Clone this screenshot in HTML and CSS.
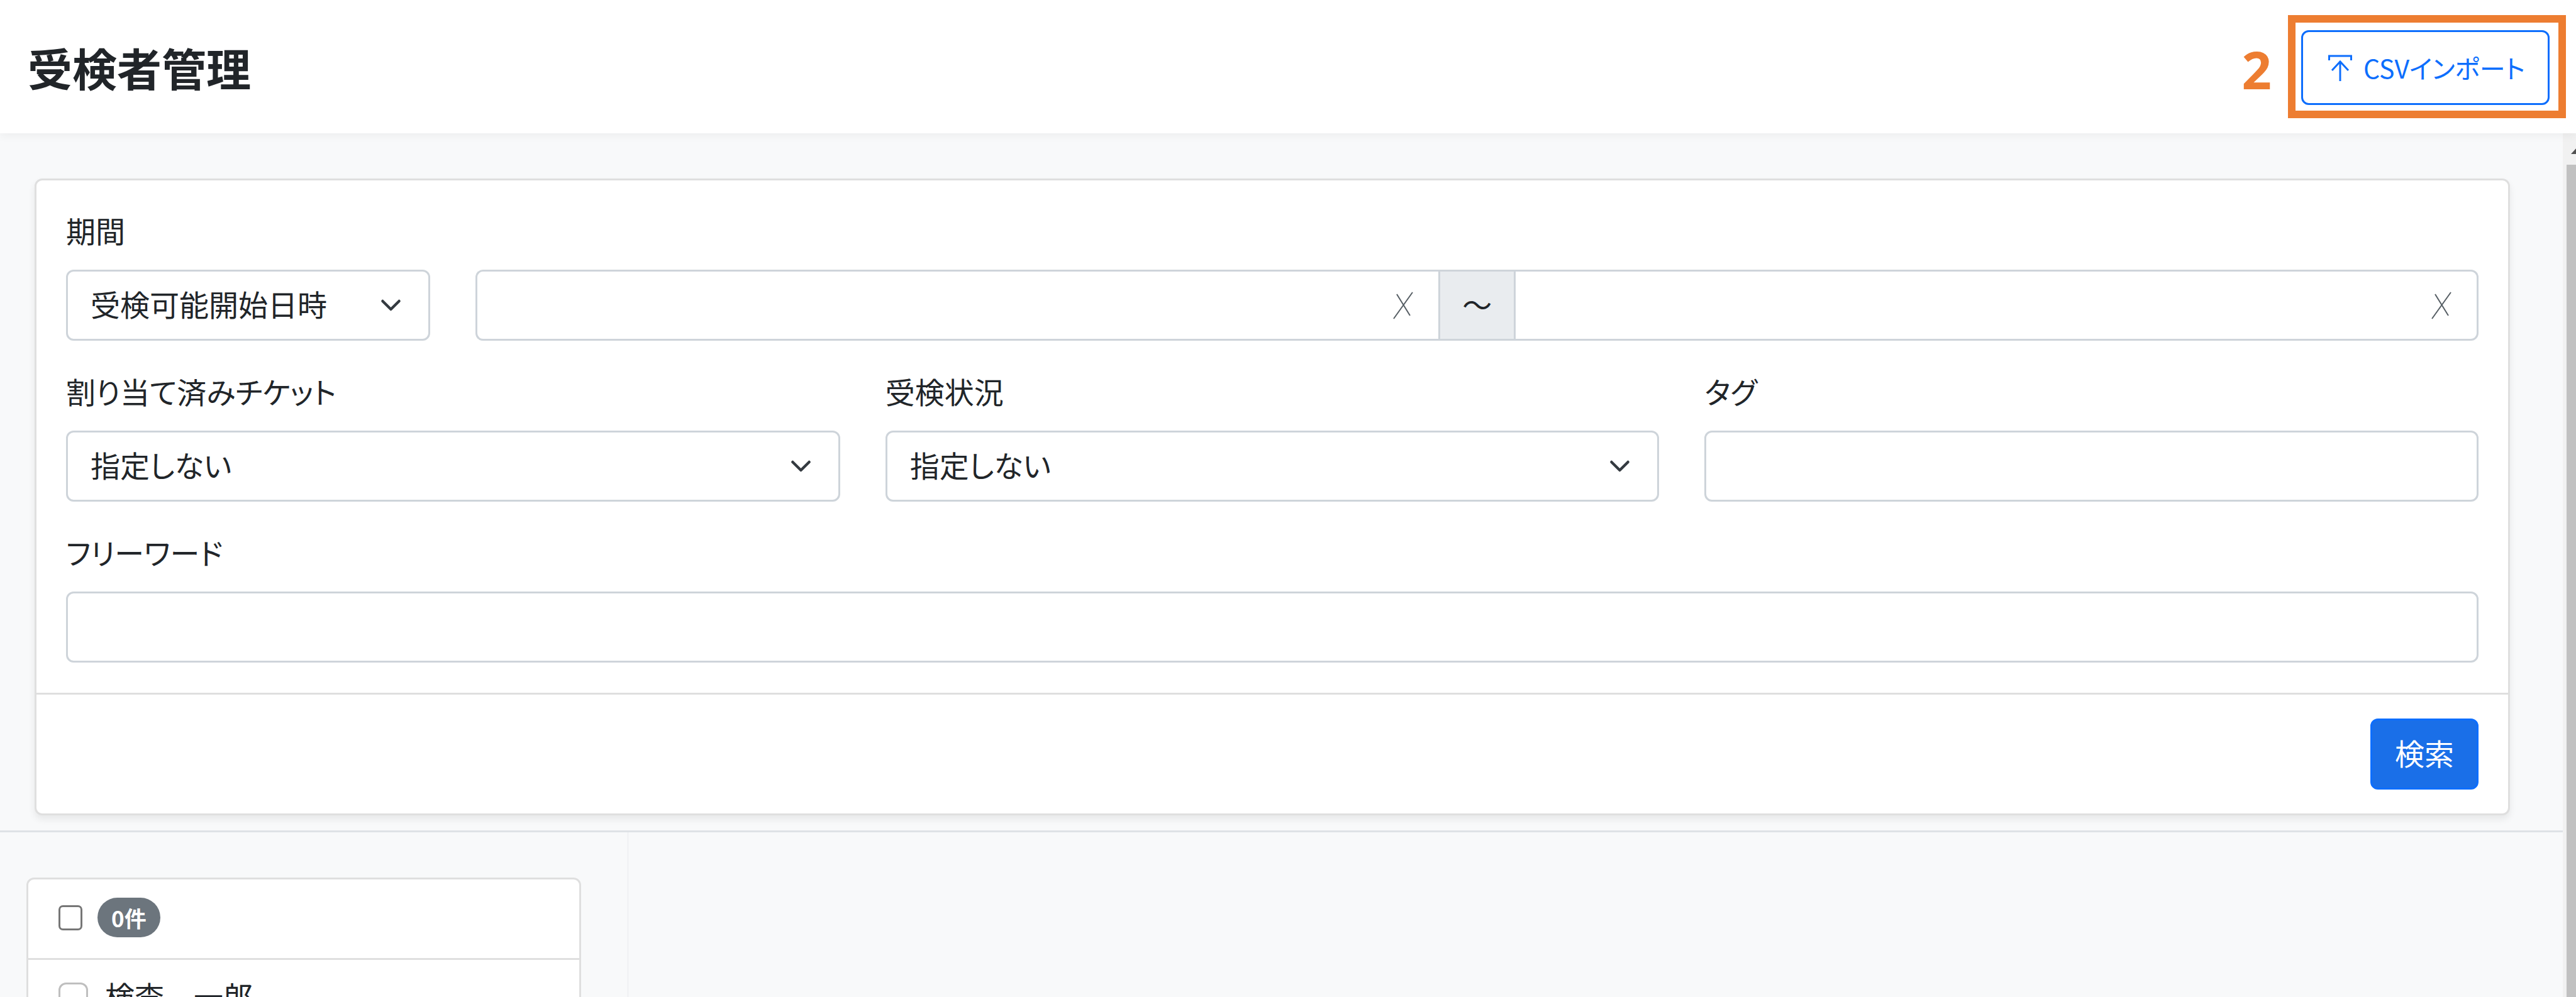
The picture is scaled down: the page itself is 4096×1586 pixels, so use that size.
FILE: index.html
```html
<!DOCTYPE html>
<html lang="ja">
<head>
  <meta charset="UTF-8" />
  <meta name="viewport" content="width=device-width, initial-scale=1.0" />
  <title>受検者管理</title>
  <link rel="stylesheet" href="styles.css">
</head>
<body>
  <header class="page-header">
    <h1>受検者管理</h1>
    <div class="header-actions">
      <span class="step-number">2</span>
      <div class="step-frame">
        <button type="button" class="btn btn-outline">
          <svg class="icon-import" viewBox="0 0 38 42" fill="none" stroke="currentColor" stroke-width="3" aria-hidden="true">
            <path d="M1.500 9V2H36.500V9M19 42V11M6 25L19 11L32 25" />
          </svg>
          CSVインポート
        </button>
      </div>
    </div>
  </header>

  <div class="viewport">
    <main class="content">
      <form class="card search-card">
        <div class="card-body">
          <div class="field col-2">
            <label for="period-type">期間</label>
            <select id="period-type" class="control">
              <option>受検可能開始日時</option>
            </select>
          </div>
          <div class="field col-10 field-bottom">
            <div class="range">
              <div class="control range-start">
                <input type="text" aria-label="開始日時" />
                <button type="button" class="clear" aria-label="開始日時をクリア">
                  <svg viewBox="0 0 32 44" fill="none" stroke="currentColor" stroke-width="2" aria-hidden="true">
                    <path d="M1 43L31 1M6 4L27 38" />
                  </svg>
                </button>
              </div>
              <span class="range-sep">～</span>
              <div class="control range-end">
                <input type="text" aria-label="終了日時" />
                <button type="button" class="clear" aria-label="終了日時をクリア">
                  <svg viewBox="0 0 32 44" fill="none" stroke="currentColor" stroke-width="2" aria-hidden="true">
                    <path d="M1 43L31 1M6 4L27 38" />
                  </svg>
                </button>
              </div>
            </div>
          </div>

          <div class="field col-4">
            <label for="ticket">割り当て済みチケット</label>
            <select id="ticket" class="control">
              <option>指定しない</option>
            </select>
          </div>
          <div class="field col-4">
            <label for="status">受検状況</label>
            <select id="status" class="control">
              <option>指定しない</option>
            </select>
          </div>
          <div class="field col-4">
            <label for="tag">タグ</label>
            <input type="text" id="tag" class="control" />
          </div>

          <div class="field col-12">
            <label for="freeword">フリーワード</label>
            <input type="text" id="freeword" class="control" />
          </div>
        </div>
        <div class="card-footer">
          <button type="submit" class="btn btn-primary">検索</button>
        </div>
      </form>

      <div class="results">
        <section class="list-pane">
          <div class="card">
            <div class="list-header">
              <input type="checkbox" id="check-all" class="check-all" />
              <label for="check-all" class="badge">0件</label>
            </div>
            <div class="list-item">
              <input type="checkbox" id="examinee-1" class="check" />
              <label for="examinee-1">検査　一郎</label>
            </div>
          </div>
        </section>
        <section class="detail-pane"></section>
      </div>
    </main>

    <div class="scrollbar" aria-hidden="true">
      <svg class="scroll-arrow" viewBox="0 0 50 50" fill="#505050">
        <path d="M13 33L25 20L37 33Z" />
      </svg>
      <div class="scroll-thumb"></div>
    </div>
  </div>
</body>
</html>
```
FILE: styles.css
```css
* {
  box-sizing: border-box;
}

body {
  height: 100vh;
  margin: 0;
  display: flex;
  flex-direction: column;
  overflow: hidden;
  font-family: "Noto Sans CJK JP", sans-serif;
  font-size: 47px;
  line-height: 71px;
  font-feature-settings: "palt";
  color: #212529;
  background: #f8f9fa;
}

input,
select,
button {
  font: inherit;
  font-feature-settings: inherit;
  color: inherit;
  margin: 0;
}

/* header */
.page-header {
  display: flex;
  flex: none;
  justify-content: space-between;
  align-items: center;
  height: 212px;
  padding: 0 16px 0 44px;
  background: white;
  box-shadow: 0 6px 12px rgba(0, 0, 0, 0.04);
  position: relative;
}

h1 {
  margin: 0;
  font-size: 71px;
  font-weight: bold;
}

.header-actions {
  display: flex;
  align-items: center;
  gap: 26px;
}

.step-number {
  padding-top: 6px;
  font-family: "Noto Sans", sans-serif;
  font-size: 83px;
  font-weight: bold;
  color: #ed7d31;
}

.step-frame {
  padding: 12px 14px 9px 9px;
  border: 12px solid #ed7d31;
}

/* buttons */
.btn {
  display: flex;
  align-items: center;
  height: 113px;
  padding: 0 36px 6px;
  border: 3px solid #0d6efd;
  border-radius: 12px;
  cursor: pointer;
}

.btn-outline {
  height: 119px;
  gap: 18px;
  padding: 0 36px 0 40px;
  color: #0d6efd;
  background: white;
  font-size: 41px;
}

.btn-primary {
  color: white;
  background: #1a6fe8;
}

.icon-import {
  width: 38px;
  height: 42px;
}

/* scroll area */
.viewport {
  display: flex;
  flex: 1;
  min-height: 0;
}

.content {
  display: flex;
  flex: 1;
  flex-direction: column;
  min-width: 0;
  padding-top: 72px;
  overflow: hidden;
}

.scrollbar {
  display: flex;
  flex-direction: column;
  width: 21px;
  overflow: hidden;
  background: #f1f1f1;
}

.scroll-arrow {
  flex: none;
  width: 50px;
  height: 50px;
}

.scroll-thumb {
  flex: 1;
  margin-left: 6px;
  background: #c1c1c1;
}

/* search form */
.card {
  background: white;
  border: 3px solid #dfdfdf;
  border-radius: 12px;
}

.search-card {
  flex: none;
  margin: 0 84px 24px 55px;
  box-shadow: 0 6px 12px rgba(0, 0, 0, 0.075);
}

.card-body {
  display: grid;
  grid-template-columns: repeat(12, 1fr);
  gap: 44px 72px;
  padding: 43px 47px 48px;
}

.col-2 {
  grid-column: span 2;
}

.col-4 {
  grid-column: span 4;
}

.col-10 {
  grid-column: span 10;
}

.col-12 {
  grid-column: span 12;
}

.field {
  display: flex;
  flex-direction: column;
  gap: 28px;
  min-width: 0;
}

.field-bottom {
  justify-content: flex-end;
}

.control {
  width: 100%;
  height: 113px;
  padding: 0 36px 6px;
  border: 3px solid #ced4da;
  border-radius: 12px;
  background: white;
}

select.control {
  appearance: none;
  background: white url("data:image/svg+xml,%3csvg xmlns='http://www.w3.org/2000/svg' viewBox='0 0 16 16'%3e%3cpath fill='none' stroke='%23343a40' stroke-linecap='round' stroke-linejoin='round' stroke-width='2' d='m2 5 6 6 6-6'/%3e%3c/svg%3e") no-repeat right 36px center / 47px 35px;
}

.range {
  display: flex;
}

.range .control {
  display: flex;
  flex: 1;
  align-items: center;
  min-width: 0;
  padding: 0 40px 0 36px;
}

.range input {
  flex: 1;
  min-width: 0;
  padding: 0;
  border: none;
  background: none;
}

.range .range-start {
  border-right: none;
  border-radius: 12px 0 0 12px;
}

.range .range-end {
  border-left: none;
  border-radius: 0 12px 12px 0;
}

.range-sep {
  display: flex;
  align-items: center;
  justify-content: center;
  width: 123px;
  padding-bottom: 6px;
  border: 3px solid #ced4da;
  background: #e9ecef;
  font-feature-settings: normal;
}

.clear {
  display: flex;
  padding: 0;
  border: none;
  background: none;
  color: #565e64;
  cursor: pointer;
}

.clear svg {
  width: 32px;
  height: 44px;
}

.card-footer {
  display: flex;
  justify-content: flex-end;
  padding: 38px 47px;
  border-top: 3px solid #dfdfdf;
}

/* results */
.results {
  display: flex;
  flex: 1;
  min-height: 0;
  border-top: 3px solid #dee2e6;
}

.list-pane {
  width: 1000px;
  padding: 72px 73px 0 42px;
  border-right: 3px solid #f2f3f5;
}

.detail-pane {
  flex: 1;
}

.list-header {
  display: flex;
  align-items: center;
  gap: 24px;
  height: 128px;
  padding: 0 48px 4px;
  border-bottom: 3px solid #dfdfdf;
}

.list-item {
  display: flex;
  align-items: center;
  gap: 27px;
  padding: 20px 48px;
}

.list-item label {
  padding-bottom: 8px;
  font-feature-settings: normal;
}

.check-all,
.check {
  appearance: none;
  background: white;
}

.check-all {
  width: 38px;
  height: 40px;
  border: 3px solid #767676;
  border-radius: 7px;
}

.check {
  width: 47px;
  height: 47px;
  border: 3px solid #bfbfbf;
  border-radius: 12px;
}

.badge {
  padding: 0 22px;
  border-radius: 32px;
  background: #6c757d;
  color: white;
  font-size: 35px;
  font-weight: bold;
  line-height: 63px;
}
```
